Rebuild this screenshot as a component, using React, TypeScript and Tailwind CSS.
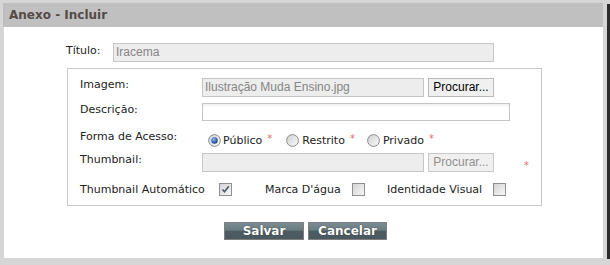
import React from "react";

const sans = { fontFamily: '"DejaVu Sans", Verdana, sans-serif' };
const arial = { fontFamily: '"Liberation Sans", Arial, sans-serif' };

function Radio({ checked }: { checked?: boolean }) {
  return (
    <svg width="13" height="13" viewBox="0 0 13 13" className="shrink-0">
      <defs>
        <linearGradient id="rg" x1="0" y1="0" x2="1" y2="1">
          <stop offset="0" stopColor="#cfcfcf" />
          <stop offset="1" stopColor="#fbfbfb" />
        </linearGradient>
        <radialGradient id="rb" cx="0.4" cy="0.35" r="0.7">
          <stop offset="0" stopColor="#9ec2f0" />
          <stop offset="0.5" stopColor="#3d70c0" />
          <stop offset="1" stopColor="#1d3f80" />
        </radialGradient>
      </defs>
      <circle cx="6.5" cy="6.5" r="5.9" fill="url(#rg)" stroke="#8d8d8d" strokeWidth="1" />
      {checked && <circle cx="6.5" cy="6.5" r="3.2" fill="url(#rb)" />}
    </svg>
  );
}

function Checkbox({ checked }: { checked?: boolean }) {
  return (
    <div className="w-[13px] h-[13px] shrink-0 border border-[#8f8f8f] bg-gradient-to-br from-[#d4d4d4] to-[#f7f7f7] flex items-center justify-center">
      {checked && (
        <svg width="11" height="11" viewBox="0 0 11 11">
          <path d="M2.5 5.5 L4.5 7.8 L8.8 2.2" fill="none" stroke="#4d5a68" strokeWidth="1.6" />
        </svg>
      )}
    </div>
  );
}

function Star() {
  return <span className="text-[#e46b6b] text-[10px] leading-none ml-[5px] relative -top-[2px]">*</span>;
}

export default function App() {
  return (
    <div className="w-[610px] h-[265px] flex bg-[#d6d6d6] overflow-hidden" style={sans}>
      <div className="flex flex-col w-[607px] pt-[3px] pl-[4px] pr-[4px] pb-[7px]">
        <div className="h-[24px] bg-[#c0c0c0] -ml-[1px] pl-[6px] text-[12px] font-bold leading-[24px] text-[#544a4a]">
          Anexo - Incluir
        </div>
        <div className="flex-1 bg-white flex flex-col text-[11px] text-[#222]">
          <div className="flex mt-[16px] ml-[62px]">
            <div className="w-[47px] leading-[13px] pt-[1px]">Título:</div>
            <div
              className="w-[381px] h-[19px] bg-[#ededed] border border-[#c6c6c6] pl-[2px] text-[12px] leading-[17px] text-[#858585]"
              style={arial}
            >
              Iracema
            </div>
          </div>

          <div className="mt-[6px] ml-[63px] w-[475px] border border-[#c8c8c8] pt-[9px] pb-[9px] pl-[12px] flex flex-col">
            <div className="flex h-[19px]">
              <div className="w-[122px] leading-[13px]">Imagem:</div>
              <div
                className="w-[222px] h-[19px] bg-[#ededed] border border-[#c6c6c6] pl-[2px] text-[12px] leading-[17px] text-[#858585] whitespace-nowrap"
                style={arial}
              >
                Ilustração Muda Ensino.jpg
              </div>
              <div
                className="ml-[4px] w-[66px] h-[19px] bg-[#f0f0f0] border border-[#b9b9b9] text-[12px] leading-[17px] text-black text-center"
                style={arial}
              >
                Procurar...
              </div>
            </div>

            <div className="flex h-[18px] mt-[6px]">
              <div className="w-[122px] leading-[13px]">Descrição:</div>
              <div className="w-[308px] h-[18px] bg-white border border-[#c4c4c4] shadow-[inset_0_2px_2px_rgba(0,0,0,0.06)]" />
            </div>

            <div className="flex h-[23px] mt-[9px]">
              <div className="w-[122px] leading-[13px]">Forma de Acesso:</div>
              <div className="flex items-center h-[13px] mt-[4px] ml-[6px] leading-[13px]">
                <Radio checked />
                <span className="ml-[2px]">Público</span>
                <Star />
                <div className="ml-[14px]"><Radio /></div>
                <span className="ml-[3px]">Restrito</span>
                <Star />
                <div className="ml-[12px]"><Radio /></div>
                <span className="ml-[3px]">Privado</span>
                <Star />
              </div>
            </div>

            <div className="flex h-[19px]">
              <div className="w-[122px] leading-[13px]">Thumbnail:</div>
              <div className="w-[222px] h-[19px] bg-[#ededed] border border-[#c6c6c6]" />
              <div
                className="ml-[4px] w-[66px] h-[19px] bg-[#f0f0f0] border border-[#c9c9c9] text-[12px] leading-[17px] text-[#8f8f8f] text-center"
                style={arial}
              >
                Procurar...
              </div>
              <div className="ml-[30px] mt-[5px]">
                <span className="text-[#e46b6b] text-[10px] leading-none">*</span>
              </div>
            </div>

            <div className="flex h-[13px] mt-[11px] items-start leading-[13px]">
              <span className="w-[139px] whitespace-nowrap">Thumbnail Automático</span>
              <Checkbox checked />
              <span className="ml-[33px] w-[87px] whitespace-nowrap">Marca D'água</span>
              <Checkbox />
              <span className="ml-[22px] w-[106px] whitespace-nowrap">Identidade Visual</span>
              <Checkbox />
            </div>
          </div>

          <div className="flex justify-center gap-[4px] mt-[16px] pl-[4px]">
            <div className="w-[80px] h-[18px] border border-[#7e7e7e] bg-[linear-gradient(#7a8b91_0%,#6a7b81_45%,#4c5c62_50%,#4a5a60_100%)] text-white font-bold text-[12px] leading-[16px] text-center [text-shadow:0_0_1px_#222]">
              Salvar
            </div>
            <div className="w-[79px] h-[18px] border border-[#7e7e7e] bg-[linear-gradient(#7a8b91_0%,#6a7b81_45%,#4c5c62_50%,#4a5a60_100%)] text-white font-bold text-[12px] leading-[16px] text-center [text-shadow:0_0_1px_#222]">
              Cancelar
            </div>
          </div>
        </div>
      </div>
      <div className="w-[3px] mt-[4px] mb-[6px] bg-[#2c2c2c]" />
    </div>
  );
}
